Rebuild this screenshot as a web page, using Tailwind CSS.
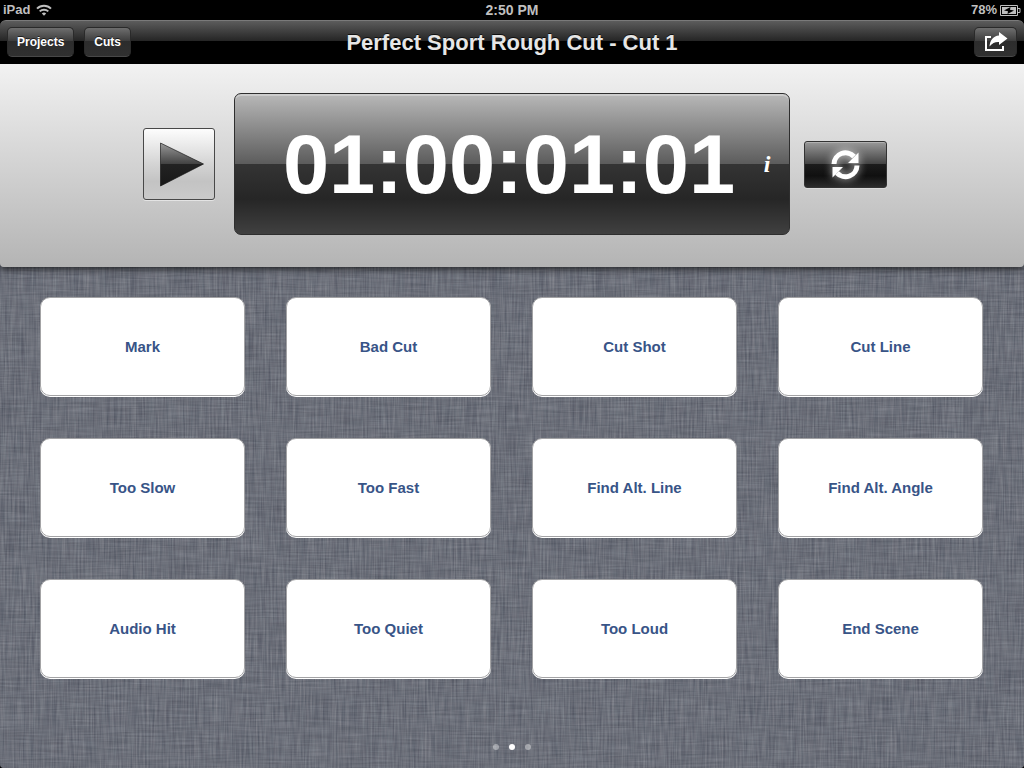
<!DOCTYPE html>
<html lang="en">
<head>
    <meta charset="UTF-8">
    <meta name="viewport" content="width=device-width, initial-scale=1.0">
    <title>Perfect Sport Rough Cut - Cut 1</title>
    <script src="https://cdn.jsdelivr.net/npm/@tailwindcss/browser@4"></script>
</head>
<body class="bg-black min-h-screen flex flex-col font-['Liberation_Sans',Arial,sans-serif] font-bold">
    <!-- Status bar -->
    <div class="h-5 shrink-0 grid grid-cols-3 items-center px-[3px] text-[13px] leading-5 text-[#bfbfbf]">
        <div class="flex items-center gap-[6px]">
            <span>iPad</span>
            <svg class="w-4 h-3" viewBox="0 0 16 12" fill="none" stroke="#bfbfbf" stroke-width="2" aria-label="Wi-Fi">
                <path d="M1 4.6a10 10 0 0 1 14 0M3.7 7.4a6.2 6.2 0 0 1 8.6 0"/>
                <path d="M8 11.8 5.8 9.6a3.2 3.2 0 0 1 4.4 0z" fill="#bfbfbf" stroke="none"/>
            </svg>
        </div>
        <span class="text-center text-sm leading-5">2:50 PM</span>
        <div class="flex items-center justify-end gap-[3px]">
            <span>78%</span>
            <svg class="w-[21px] h-[11px]" viewBox="0 0 21 11" aria-label="Charging">
                <path d="M.5.5h17v10H.5zM18 3.5h2v4h-2" fill="none" stroke="#bfbfbf"/>
                <path d="M2 2h14v7H2z" fill="#bfbfbf"/>
                <path d="M10.500 2 4 5.500l4 .8L7.500 9 14 5.500l-4-.8z" fill="#000"/>
            </svg>
        </div>
    </div>

    <!-- Navigation bar -->
    <header class="h-11 shrink-0 grid grid-cols-[1fr_auto_1fr] items-start px-[7px] pt-[6px] rounded-t-md border-t border-[#7a7a7a] bg-[linear-gradient(#5c5c5c,#242424_47%,#000_47%)]">
        <div class="flex gap-[10px]">
            <button class="h-[30px] px-[9px] rounded-[5px] border border-[#2a2a2a] border-b-[#484848] bg-[linear-gradient(#6e6e6e,#3c3c3c_47%,#2c2c2c_47%,#303030)] text-white text-xs [text-shadow:0_-1px_0_rgba(0,0,0,.6)]">Projects</button>
            <button class="h-[30px] px-[9px] rounded-[5px] border border-[#2a2a2a] border-b-[#484848] bg-[linear-gradient(#6e6e6e,#3c3c3c_47%,#2c2c2c_47%,#303030)] text-white text-xs [text-shadow:0_-1px_0_rgba(0,0,0,.6)]">Cuts</button>
        </div>
        <h1 class="text-[22px] leading-8 text-[#e6e6e6] [text-shadow:0_-1px_0_rgba(0,0,0,.7)]">Perfect Sport Rough Cut - Cut 1</h1>
        <button aria-label="Share" class="justify-self-end w-[43px] h-[30px] flex items-center justify-center rounded-[5px] border border-[#2a2a2a] border-b-[#484848] bg-[linear-gradient(#6e6e6e,#3c3c3c_47%,#2c2c2c_47%,#303030)]">
            <svg class="w-6 h-5" viewBox="0 0 24 20">
                <path d="M7 5H2v13h17v-4" fill="none" stroke="#fff" stroke-width="2"/>
                <path d="M15 0l8.500 6.500L15 13v-3c-4-.2-6.500.8-9.500 4.500C6 8 9.500 4 15 3.500z" fill="#fff"/>
            </svg>
        </button>
    </header>

    <!-- Transport panel -->
    <section class="relative z-10 shrink-0 pt-[29px] pb-8 grid grid-cols-[1fr_auto_1fr] items-center rounded-b-[4px] bg-linear-to-b from-[#f2f2f2] to-[#b4b4b4] shadow-[0_2px_7px_rgba(0,0,0,.7)]">
        <button aria-label="Play" class="justify-self-end mr-[19px] size-[72px] rounded-[3px] border border-[#484848] bg-[linear-gradient(#fdfdfd,#d4d4d4_50%,#c3c3c3_75%,#cacaca)] shadow-[0_1px_0_rgba(255,255,255,.5)]">
            <svg class="size-full" viewBox="0 0 70 70">
                <defs>
                    <linearGradient id="play" x1="0" y1="0" x2="0" y2="1">
                        <stop offset="0" stop-color="#999"/>
                        <stop offset=".5" stop-color="#404040"/>
                        <stop offset=".5" stop-color="#222"/>
                        <stop offset="1" stop-color="#181818"/>
                    </linearGradient>
                </defs>
                <path d="M16.500 14 59.500 35 16.500 57z" fill="url(#play)"/>
                <path d="M16.500 14 59.500 35 16.500 57z" fill="none" stroke="#111" stroke-opacity=".65"/>
            </svg>
        </button>
        <div class="h-[142px] flex items-center gap-[26px] rounded-[7px] border border-[#2e2e2e] pl-12 pr-4 bg-[linear-gradient(#b8b8b8,#5c5c5c_50%,#343434_50%,#262626_75%,#404040)] shadow-[inset_0_2px_0_rgba(255,255,255,.3)]">
            <output class="text-[83px] leading-none text-white">01:00:01:01</output>
            <button aria-label="Info" class="w-3 text-2xl leading-none italic text-white font-['Liberation_Serif',serif] font-bold">i</button>
        </div>
        <button aria-label="Loop" class="ml-[14px] w-[83px] h-[47px] rounded-[3px] border border-[#333] bg-[linear-gradient(#999,#424242_49%,#1c1c1c_49%,#101010_75%,#2c2c2c)] shadow-[inset_0_1px_0_rgba(255,255,255,.25),0_1px_0_rgba(255,255,255,.3)]">
            <svg class="size-full [filter:drop-shadow(0_0_4px_rgba(255,255,255,.75))]" viewBox="0 0 81 45">
                <path d="M29 22A11.500 11.500 0 0 1 49 14.500M52 23.500A11.500 11.500 0 0 1 32 31" fill="none" stroke="#fff" stroke-width="5"/>
                <path d="M53.500 10.500v10.500H43zM27.500 35.500V25H38z" fill="#fff"/>
            </svg>
        </button>
    </section>

    <!-- Marker buttons -->
    <main class="relative isolate grow flex flex-col overflow-hidden -mt-1 rounded-b-[4px] bg-[#6c6f79] pt-[34px] pl-10 pr-[41px]">
        <svg class="absolute inset-0 -z-10 size-full" aria-hidden="true">
            <filter id="weft" x="0" y="0" width="100%" height="100%" color-interpolation-filters="sRGB">
                <feTurbulence type="fractalNoise" baseFrequency=".03 .55" numOctaves="2" seed="4"/>
                <feColorMatrix values=".5 .05 0 0 .145  .5 0 0 0 .185  .5 0 0 0 .225  0 0 0 0 .4"/>
            </filter>
            <filter id="warp" x="0" y="0" width="100%" height="100%" color-interpolation-filters="sRGB">
                <feTurbulence type="fractalNoise" baseFrequency=".55 .03" numOctaves="2" seed="9"/>
                <feColorMatrix values=".45 .05 0 0 .170  .45 0 0 0 .210  .4 0 0 0 .275  0 0 0 0 .4"/>
            </filter>
            <rect width="100%" height="100%" filter="url(#weft)"/>
            <rect width="100%" height="100%" filter="url(#warp)"/>
        </svg>

        <div class="grid grid-cols-4 auto-rows-[99px] gap-x-[41px] gap-y-[42px] text-[15px] text-[#385487]">
            <button class="rounded-[10px] border border-[#a3a3a5] bg-white pt-[2px] shadow-[0_1px_0_#fff]">Mark</button>
            <button class="rounded-[10px] border border-[#a3a3a5] bg-white pt-[2px] shadow-[0_1px_0_#fff]">Bad Cut</button>
            <button class="rounded-[10px] border border-[#a3a3a5] bg-white pt-[2px] shadow-[0_1px_0_#fff]">Cut Shot</button>
            <button class="rounded-[10px] border border-[#a3a3a5] bg-white pt-[2px] shadow-[0_1px_0_#fff]">Cut Line</button>
            <button class="rounded-[10px] border border-[#a3a3a5] bg-white pt-[2px] shadow-[0_1px_0_#fff]">Too Slow</button>
            <button class="rounded-[10px] border border-[#a3a3a5] bg-white pt-[2px] shadow-[0_1px_0_#fff]">Too Fast</button>
            <button class="rounded-[10px] border border-[#a3a3a5] bg-white pt-[2px] shadow-[0_1px_0_#fff]">Find Alt. Line</button>
            <button class="rounded-[10px] border border-[#a3a3a5] bg-white pt-[2px] shadow-[0_1px_0_#fff]">Find Alt. Angle</button>
            <button class="rounded-[10px] border border-[#a3a3a5] bg-white pt-[2px] shadow-[0_1px_0_#fff]">Audio Hit</button>
            <button class="rounded-[10px] border border-[#a3a3a5] bg-white pt-[2px] shadow-[0_1px_0_#fff]">Too Quiet</button>
            <button class="rounded-[10px] border border-[#a3a3a5] bg-white pt-[2px] shadow-[0_1px_0_#fff]">Too Loud</button>
            <button class="rounded-[10px] border border-[#a3a3a5] bg-white pt-[2px] shadow-[0_1px_0_#fff]">End Scene</button>
        </div>

        <!-- Page dots -->
        <nav class="mt-auto pb-[18px] flex justify-center gap-[10px]" aria-label="Pages">
            <button aria-label="Page 1" class="size-[6px] rounded-full bg-white/40"></button>
            <button aria-label="Page 2" aria-current="page" class="size-[6px] rounded-full bg-white"></button>
            <button aria-label="Page 3" class="size-[6px] rounded-full bg-white/40"></button>
        </nav>
    </main>
</body>
</html>
